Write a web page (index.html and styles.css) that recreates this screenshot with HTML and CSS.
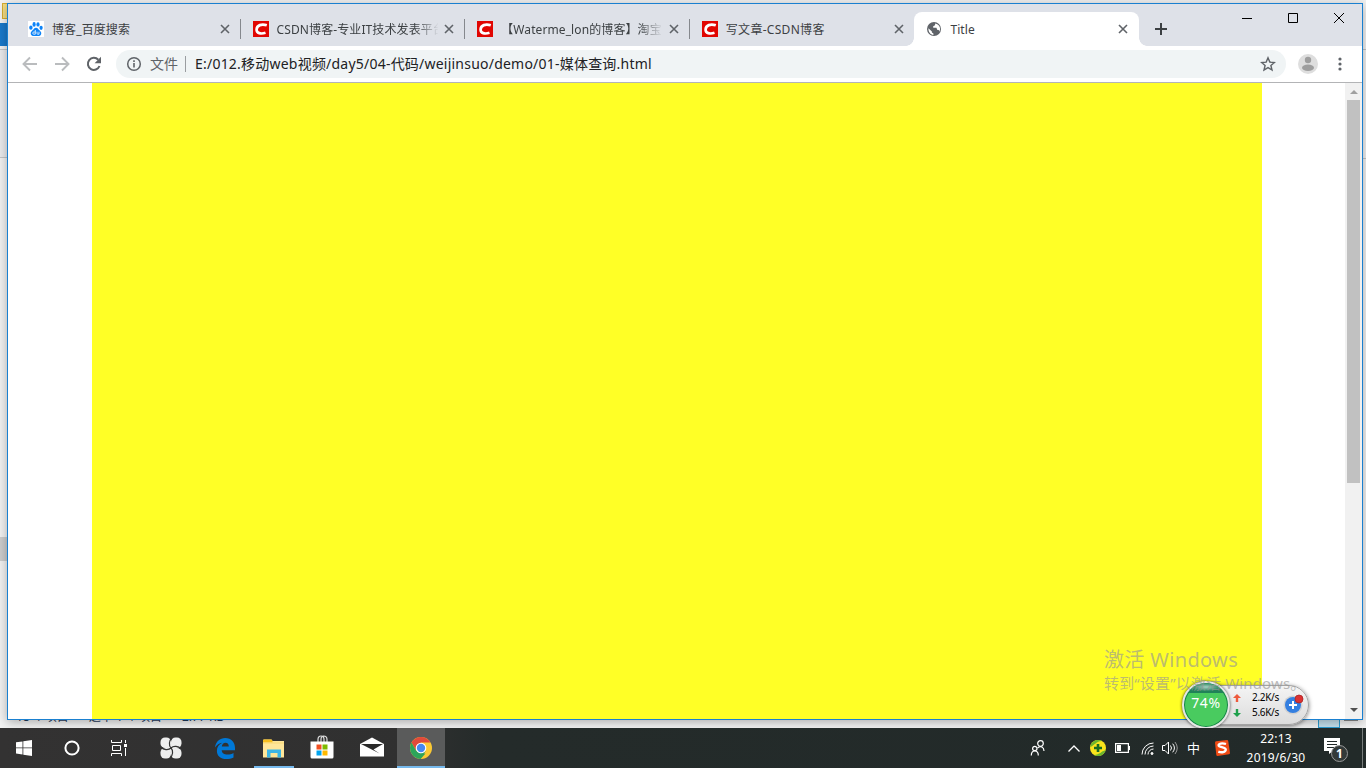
FILE: index.html
```
<!DOCTYPE html>
<html lang="zh-CN">

<head>
    <meta charset="UTF-8">
    <meta name="viewport" content="width=device-width, initial-scale=1.0">
    <title>Title</title>
    <link rel="stylesheet" href="styles.css">
</head>

<body>
    <svg class="defs">
        <symbol id="close" viewBox="0 0 10 10">
            <path d="M1 1l8 8M9 1l-8 8" stroke="#5f6368" stroke-width="1.6" />
        </symbol>
        <symbol id="csdn" viewBox="0 0 16 16">
            <path fill="#e10602" d="M0 0h16v16H0z" />
            <path d="M13.800 4.300C8.500 2.500 3.900 4.300 3.600 8.300C3.300 12.500 8 13.200 12.500 11.800" fill="none" stroke="#fff" stroke-width="2.700" />
        </symbol>
    </svg>

    <div class="desktop">
        <!-- explorer window behind -->
        <div class="back-folder"></div>
        <div class="back-tab"></div>
        <div class="back-panel"></div>
        <div class="back-thumb"></div>
        <div class="back-line"></div>
        <div class="back-status"><span>18 个项目</span><span>选中 1 个项目</span><span>2.77 KB</span></div>
        <div class="back-view"></div>
        <div class="back-view2"></div>

        <div class="window">
            <div class="tabs">
                <div class="tab">
                    <svg class="favicon" viewBox="0 0 16 16">
                        <path fill="#fff" d="M0 0h16v16H0z" />
                        <g fill="#0c83f8">
                            <ellipse cx="6.100" cy="3.400" rx="1.600" ry="2.300" />
                            <ellipse cx="10" cy="3.400" rx="1.600" ry="2.200" />
                            <ellipse cx="2.900" cy="6.700" rx="1.700" ry="2.100" />
                            <ellipse cx="13.100" cy="6.800" rx="1.600" ry="2.100" />
                            <path d="M8 6.700c1.900 0 2.300 1.800 3.700 2.900 1.800 1.500 2 3.200 1 4.500-1.200 1.500-2.800.8-4.700.8s-3.500.7-4.700-.8c-1-1.300-.8-3 1-4.500C5.700 8.500 6.100 6.700 8 6.700z" />
                        </g>
                        <path d="M7.300 9v4.200H5.800c-1.500 0-1.500-2.200 0-2.200h1.500M9 10.700v1.700c0 .8.500.8 2 .8v-2.500" fill="none" stroke="#fff" stroke-width=".8" />
                    </svg>
                    <span class="tab-title">博客_百度搜索</span>
                    <svg class="tab-close"><use href="#close" /></svg>
                </div>
                <div class="tab">
                    <svg class="favicon"><use href="#csdn" /></svg>
                    <span class="tab-title fade">CSDN博客-专业IT技术发表平台</span>
                    <svg class="tab-close"><use href="#close" /></svg>
                </div>
                <div class="tab">
                    <svg class="favicon"><use href="#csdn" /></svg>
                    <span class="tab-title fade">【Waterme_lon的博客】淘宝</span>
                    <svg class="tab-close"><use href="#close" /></svg>
                </div>
                <div class="tab last">
                    <svg class="favicon"><use href="#csdn" /></svg>
                    <span class="tab-title wider">写文章-CSDN博客</span>
                    <svg class="tab-close"><use href="#close" /></svg>
                </div>
                <div class="tab active">
                    <svg class="favicon" viewBox="0 0 16 16">
                        <circle cx="8" cy="8" r="7" fill="#5f6368" />
                        <path d="M2.400 7.200l3.500 3.200v1l1.500 1.200v1.300c-3-.3-5.200-3-5-6.700zM9.200 2.500l-.2 1.700-1.800 1v1.500h3.200l1 2.200h1.200c.7.400.8 1.500.3 2.300 2.600-3.200.8-7.800-3.700-8.700z" fill="#fff" />
                    </svg>
                    <span class="tab-title">Title</span>
                    <svg class="tab-close"><use href="#close" /></svg>
                </div>
                <svg class="new-tab" viewBox="0 0 12 12"><path d="M6 0v12M0 6h12" stroke="#3c4043" stroke-width="2" /></svg>
                <svg class="controls" viewBox="0 0 104 12" fill="none" stroke="#000">
                    <path d="M0 6.500h10M46.500 1.500h9v9h-9zM92 1l10 10M102 1l-10 10" />
                </svg>
            </div>

            <div class="toolbar">
                <svg class="nav" viewBox="0 0 16 16"><path d="M15 8H2M8 1.500L1.500 8 8 14.500" fill="none" stroke="#babcbe" stroke-width="1.900" /></svg>
                <svg class="nav" viewBox="0 0 16 16"><path d="M1 8h13M8 1.500L14.500 8 8 14.500" fill="none" stroke="#babcbe" stroke-width="1.900" /></svg>
                <svg class="nav" viewBox="0 0 16 16">
                    <path d="M13.500 10a6 6 0 1 1-1.200-6.200" fill="none" stroke="#5f6368" stroke-width="2" />
                    <path d="M15 .8v6.400H8.600z" fill="#5f6368" />
                </svg>
                <div class="omnibox">
                    <svg class="info" viewBox="0 0 16 16"><circle cx="8" cy="8" r="6.300" fill="none" stroke="#5f6368" stroke-width="1.500" /><path d="M8 7v4.500M8 4.300v1.600" stroke="#5f6368" stroke-width="1.600" /></svg>
                    <span class="scheme">文件</span>
                    <span class="url">E:/012.移动web视频/day5/04-代码/weijinsuo/demo/01-媒体查询.html</span>
                    <svg class="star" viewBox="0 0 16 16"><path d="M8 1.800l1.800 4.300 4.600.4-3.500 3 1.100 4.500L8 11.600 4 14l1.100-4.500-3.500-3 4.600-.4z" fill="none" stroke="#5f6368" stroke-width="1.400" /></svg>
                </div>
                <svg class="avatar" viewBox="0 0 20 20"><circle cx="10" cy="10" r="10" fill="#dedede" /><circle cx="10" cy="6" r="3.200" fill="#9e9e9e" /><ellipse cx="10" cy="13.800" rx="6" ry="3.200" fill="#9e9e9e" /></svg>
                <svg class="menu" viewBox="0 0 4 14" fill="#5f6368"><circle cx="2" cy="2" r="1.600" /><circle cx="2" cy="7" r="1.600" /><circle cx="2" cy="12" r="1.600" /></svg>
            </div>

            <div class="page">
                <div class="container"></div>
                <div class="scrollbar">
                    <div class="arrow-up"></div>
                    <div class="thumb"></div>
                    <div class="arrow-down"></div>
                </div>
            </div>
        </div>

        <!-- network speed widget -->
        <div class="speed">
            <div class="rates">
                <svg class="rate-arrow" viewBox="0 0 8 8"><path d="M4 0l4 4H5.200v4H2.800V4H0z" fill="#ee5a3c" /></svg><span>2.2K/s</span>
                <svg class="rate-arrow" viewBox="0 0 8 8"><path d="M4 8l4-4H5.200V0H2.800v4H0z" fill="#1ea04c" /></svg><span>5.6K/s</span>
            </div>
            <svg class="boost" viewBox="0 0 22 22">
                <circle cx="10" cy="12" r="9.500" fill="#d2d2d2" /><circle cx="10" cy="12" r="8" fill="#347fe0" />
                <path d="M10 8v8M6 12h8" stroke="#fff" stroke-width="2" />
                <circle cx="16" cy="6" r="4" fill="#dc3232" stroke="#a92424" stroke-width=".8" />
            </svg>
            <div class="ball"><div class="wave"></div><span>74%</span></div>
        </div>

        <div class="watermark">
            <div class="wm-title">激活 Windows</div>
            <div class="wm-text">转到“设置”以激活 Windows。</div>
        </div>

        <div class="taskbar">
            <div class="task">
                <svg width="16" height="16" viewBox="0 0 16 16" fill="#fff"><path d="M0 2.300L6.500 1.400V7.500H0zM7.300 1.300L16 0v7.500H7.300zM0 8.300h6.500v6.200L0 13.600zM7.300 8.300H16V16l-8.700-1.300z" /></svg>
            </div>
            <div class="task">
                <svg width="16" height="16" viewBox="0 0 16 16"><circle cx="8" cy="8" r="6.600" fill="none" stroke="#fff" stroke-width="2" /></svg>
            </div>
            <div class="task view">
                <svg width="17" height="16" viewBox="0 0 17 16" fill="none" stroke="#fff"><path d="M.5 0v2.500h10V0M.5 16v-2.500h10V16M1.500 5.500h8v5h-8zM14.500 0v3M14.500 8v8" /><path d="M13 4h3v3h-3z" fill="#fff" stroke="none" /></svg>
            </div>
            <div class="task wide">
                <svg width="22" height="22" viewBox="0 0 22 22">
                    <g fill="#eee"><rect x=".5" y=".5" width="10.500" height="10.500" rx="4.500" /><rect x="11" y=".5" width="10.500" height="10.500" rx="4.500" /><rect x=".5" y="11" width="10.500" height="10.500" rx="4.500" /><rect x="11" y="11" width="10.500" height="10.500" rx="4.500" /><circle cx="11" cy="11" r="4" /></g>
                    <path d="M11 11C8.500 8.500 9 3.500 12 1M11 11c2.500-2.500 7.500-2 10 1M11 11c2.500 2.500 2 7.500-1 10M11 11C8.500 13.500 3.500 13 1 10" fill="none" stroke="#333" stroke-width="1.200" />
                </svg>
            </div>
            <div class="task edge">
                <svg width="20" height="21" viewBox="0 0 20 21"><path d="M0 9.500C.8 3.500 5 0 10.200 0 16.500 0 20 4.500 20 10v2.300H6.700c.2 3 2.600 4.300 5.600 4.300 2.500 0 4.500-.6 6.200-1.600v4.500c-2 1-4.600 1.500-7.200 1.500C5.500 21 1.900 17.600 1.900 12.900c0-3.700 1.900-6.600 5.400-8.200C4.200 5 1.800 6.700 0 9.500zM6.800 8.500h7c0-2.400-1.100-3.800-3.300-3.800-2 0-3.400 1.500-3.700 3.800z" fill="#0078d7" /></svg>
            </div>
            <div class="task explorer">
                <svg width="22" height="19" viewBox="0 0 22 19"><path d="M0 1.500Q0 .5 1 .5h7.500l1 1.500H21v16.500H0z" fill="#ffe69a" /><path d="M0 1.500Q0 .5 1 .5h7.500l1 1.500v1.500H0z" fill="#f5bd1e" /><path d="M0 3.500h21v1H0z" fill="#f9d875" /><path d="M4 18.500v-8h14v8h-3.500V14h-7v4.500z" fill="#3db5e6" /></svg>
            </div>
            <div class="task store">
                <svg width="24" height="24" viewBox="0 0 24 24"><path d="M8 7V4.500C8 2 9.300 1 11 1s3 1 3 3.500V7M11 7V4.500C11 2 12 1 13.500 1S17 2 17 4.500V7" fill="none" stroke="#ddd" stroke-width="1.200" /><path d="M.5 6.500h23V22q0 1.500-1.500 1.500H2Q.5 23.500.5 22z" fill="#fff" /><path d="M6.500 9.500h5v5h-5z" fill="#f25022" /><path d="M12.500 9.500h5v5h-5z" fill="#7fba00" /><path d="M6.500 15.500h5v5h-5z" fill="#00a4ef" /><path d="M12.500 15.500h5v5h-5z" fill="#ffb900" /></svg>
            </div>
            <div class="task mail">
                <svg width="24" height="20" viewBox="0 0 24 20"><path d="M0 7L12 .5 24 7v12.500H0z" fill="#fff" /><path d="M1 7h22L13.500 12.500 19.500 16.500z" fill="#292929" /></svg>
            </div>
            <div class="task chrome">
                <svg width="22" height="22" viewBox="0 0 22 22"><circle cx="11" cy="11" r="11" fill="#fbc934" /><path d="M1.500 5.500A11 11 0 0 1 20.500 5.500H11L6.200 13.800z" fill="#e04a3b" /><path d="M1.500 5.500l4.700 8.200L11 16.500h4.500L10.500 22A11 11 0 0 1 1.500 5.500z" fill="#2da45a" /><path d="M10.500 22l5.200-8.300-4.700 2.300z" fill="#2da45a" /><circle cx="11" cy="11" r="5.300" fill="#fff" /><circle cx="11" cy="11" r="4.200" fill="#4688f1" /></svg>
            </div>

            <div class="tray">
                <svg class="people" viewBox="0 0 16 16" fill="none" stroke="#fff" stroke-width="1.200"><circle cx="10.500" cy="3.500" r="2.800" /><circle cx="4.800" cy="8.500" r="2.200" /><path d="M1.300 15.500c0-6 7-6 7 0M7.500 8c3-2.500 6.500-1 6.500 3" /></svg>
                <svg class="chevron" viewBox="0 0 12 7"><path d="M.5 6.500L6 1l5.500 5.500" fill="none" stroke="#fff" stroke-width="1.300" /></svg>
                <svg class="guard" viewBox="0 0 16 16"><circle cx="8" cy="8" r="8" fill="#f9e31c" /><path d="M1 4A8 8 0 0 1 12 1C6 1.500 5 5 .3 7zM15.700 10A8 8 0 0 1 4 15c6-.5 7-3.500 11.700-5z" fill="#6cb52d" /><path d="M8 4v8M4 8h8" stroke="#176b21" stroke-width="2.600" /></svg>
                <svg class="battery" viewBox="0 0 16 10"><path d="M.6 .6h12.800v8.800H.6z" fill="none" stroke="#fff" stroke-width="1.200" /><path d="M2 2h4v6H2zM14 3h1v4h-1z" fill="#fff" /></svg>
                <svg class="wifi" viewBox="0 0 13 13" fill="none" stroke="#fff"><path d="M1 12.500A11.500 11.500 0 0 1 12.500 1M4 12.500A8.500 8.500 0 0 1 12.500 4M7 12.500A5.500 5.500 0 0 1 12.500 7" /><circle cx="11" cy="11.500" r="1" fill="#fff" /></svg>
                <svg class="volume" viewBox="0 0 16 14" fill="none" stroke="#fff"><path d="M.5 4.500H3L6.500 1v12L3 9.500H.5zM8.500 4.500q2 2.500 0 5M10.700 2.700q3.500 4.300 0 8.600" /><path d="M13 1q4.500 6 0 12" stroke="#999" /></svg>
                <span class="ime">中</span>
                <svg class="sogou" viewBox="0 0 16 16"><path d="M1 2.500Q1 1.500 2 1.300L13 0q1 0 1.200 1L16 13q0 1-1 1.300L3.500 16q-1 0-1.200-1z" fill="#f04b14" /><path d="M12 4C8 2.700 4.300 3.500 4.600 5.500s7.200 1.300 7.200 4.100S7.500 12.800 4.300 11.600" fill="none" stroke="#fff" stroke-width="2.300" /></svg>
                <div class="clock"><span>22:13</span><span>2019/6/30</span></div>
                <svg class="notice" viewBox="0 0 25 25"><path d="M0 0h16v13H9l-4 3v-3H0z" fill="#fff" /><path d="M3 3.500h10M3 6.500h10M3 9.500h7" stroke="#222a29" /><circle cx="15.500" cy="15.500" r="8" fill="#333a39" stroke="#999" /><text x="15.500" y="20" text-anchor="middle">1</text></svg>
            </div>
        </div>
    </div>
</body>

</html>
```
FILE: styles.css
```
body {
    margin: 0;
    overflow: hidden;
    font-family: "Noto Sans", "Noto Sans CJK SC", sans-serif;
    font-size: 12px;
}

svg {
    display: block;
    flex: none;
}

.defs {
    display: none;
}

.desktop {
    position: relative;
    width: 1366px;
    height: 768px;
    overflow: hidden;
    background: #f2f2f2;
}

/* explorer window behind the browser */
.back-folder {
    position: absolute;
    left: 2px;
    top: 3px;
    width: 10px;
    height: 14px;
    border: 1px solid #d5ad32;
    background: #f4dd83;
}

.back-tab {
    position: absolute;
    left: 0;
    top: 23px;
    width: 10px;
    height: 23px;
    background: #1979ca;
}

.back-panel {
    position: absolute;
    left: 0;
    top: 49px;
    width: 10px;
    height: 107px;
    border-top: 1px solid #c4c5c6;
    border-bottom: 1px solid #c4c5c6;
    background: #eaebed;
}

.back-thumb {
    position: absolute;
    left: 0;
    top: 537px;
    width: 8px;
    height: 24px;
    background: #cdcdcd;
}

.back-line {
    position: absolute;
    right: 0;
    top: 49px;
    width: 4px;
    height: 108px;
    border-top: 1px solid #c4c5c6;
    border-bottom: 1px solid #c4c5c6;
}

.back-status {
    position: absolute;
    left: 16px;
    top: 708px;
    display: flex;
    gap: 20px;
    line-height: 18px;
    color: #1e395b;
}

.back-view {
    position: absolute;
    left: 1318px;
    top: 708px;
    width: 20px;
    height: 18px;
    border: 1px solid #2c9cd0;
    background: #c4e0ed;
}

.back-view2 {
    position: absolute;
    left: 1344px;
    top: 719px;
    width: 14px;
    height: 2px;
    background: #888;
}

/* browser */
.window {
    position: absolute;
    left: 7px;
    top: 3px;
    box-sizing: border-box;
    width: 1356px;
    height: 717px;
    border: 1px solid #1a80d0;
    background: #fff;
    box-shadow: 0 2px 10px rgba(0, 0, 0, 0.3);
    display: flex;
    flex-direction: column;
}

.tabs {
    display: flex;
    align-items: flex-end;
    height: 42px;
    padding-left: 8px;
    background: #dee1e8;
}

.tab {
    box-sizing: border-box;
    position: relative;
    display: flex;
    align-items: center;
    width: 224.6px;
    height: 34px;
    padding-left: 12px;
}

.tab:not(.active):not(.last)::after {
    content: "";
    width: 1px;
    height: 20px;
    margin-left: 10px;
    background: #85888d;
}

.favicon {
    width: 16px;
    height: 16px;
}

.tab-title {
    width: 163px;
    margin: 2px 6px 0 8px;
    line-height: 18px;
    letter-spacing: 0.1px;
    color: #3c4043;
    white-space: nowrap;
    overflow: hidden;
}

.wider {
    letter-spacing: 0.3px;
}

.fade {
    -webkit-mask-image: linear-gradient(to right, #000 138px, transparent 162px);
    mask-image: linear-gradient(to right, #000 138px, transparent 162px);
}

.tab-close {
    width: 10px;
    height: 10px;
}

.last .tab-title,
.active .tab-title {
    width: 162px;
}

.active {
    background: #fff;
    border-radius: 8px 8px 0 0;
}

/* curved feet of the active tab */
.active::before,
.active::after {
    content: "";
    position: absolute;
    bottom: 0;
    width: 8px;
    height: 8px;
}

.active::before {
    left: -8px;
    background: radial-gradient(circle at 0 0, transparent 7.5px, #fff 8px);
}

.active::after {
    right: -8px;
    background: radial-gradient(circle at 100% 0, transparent 7.5px, #fff 8px);
}

.new-tab {
    width: 12px;
    height: 12px;
    margin: 0 0 11px 16px;
}

.controls {
    width: 104px;
    height: 12px;
    margin: 0 0 22px 75px;
}

.toolbar {
    display: flex;
    align-items: center;
    height: 36px;
    padding-left: 14px;
    border-bottom: 1px solid #b3b4b6;
}

.nav {
    width: 16px;
    height: 16px;
    margin-right: 16px;
}

.omnibox {
    box-sizing: border-box;
    display: flex;
    align-items: center;
    width: 1170px;
    height: 28px;
    margin-left: -2px;
    padding: 0 10px;
    border-radius: 14px;
    background: #f0f4f5;
    font-size: 14px;
}

.info,
.star {
    width: 16px;
    height: 16px;
}

.scheme {
    margin-left: 8px;
    padding-right: 7px;
    border-right: 1px solid #9a9da0;
    line-height: 16px;
    color: #5f6368;
}

.url {
    margin: 0 0 2px 9px;
    letter-spacing: 0.22px;
    color: #202124;
    white-space: nowrap;
}

.star {
    margin-left: auto;
}

.avatar {
    width: 20px;
    height: 20px;
    margin-left: 12px;
}

.menu {
    width: 4px;
    height: 14px;
    margin-left: 20px;
}

.page {
    display: flex;
    flex: 1;
}

.container {
    width: 1170px;
    margin: 0 auto;
    background: #ffff26;
}

.scrollbar {
    display: flex;
    flex-direction: column;
    align-items: center;
    width: 17px;
    background: #f1f1f1;
}

.arrow-up {
    margin-top: 7px;
    border: 4px solid transparent;
    border-top: 0;
    border-bottom-color: #a0a0a0;
}

.arrow-down {
    margin: auto 0 7px;
    border: 4px solid transparent;
    border-bottom: 0;
    border-top-color: #505050;
}

.thumb {
    width: 13px;
    height: 383px;
    margin-top: 6px;
    background: #c1c1c1;
}

/* speed widget */
.speed {
    position: absolute;
    left: 1184px;
    top: 685px;
    box-sizing: border-box;
    display: flex;
    align-items: center;
    width: 125px;
    height: 40px;
    padding-left: 48px;
    border: 1px solid #a3a3a3;
    border-radius: 20px;
    background: linear-gradient(#f4f4f4, #dcdcdc);
    box-shadow: 0 1px 4px rgba(0, 0, 0, 0.5);
}

.rates {
    display: grid;
    grid-template-columns: 8px 38px;
    align-items: center;
    line-height: 15px;
    font-size: 10px;
    letter-spacing: -0.3px;
    text-align: right;
    color: #000;
}

.rate-arrow {
    width: 8px;
    height: 8px;
}

.boost {
    width: 22px;
    height: 22px;
    margin: -2px 0 0 4px;
}

.ball {
    position: absolute;
    left: -3px;
    top: -5px;
    box-sizing: border-box;
    width: 48px;
    height: 48px;
    border: 2px solid #e6e6e6;
    border-radius: 50%;
    background: #49cb5f;
    box-shadow: inset 0 0 0 1px #168249, 0 0 3px rgba(0, 0, 0, 0.7);
    overflow: hidden;
    color: #fff;
    font-size: 14px;
    line-height: 39px;
    letter-spacing: 0.6px;
    text-align: center;
}

.ball span {
    position: relative;
}

.wave {
    position: absolute;
    left: 0;
    top: 0;
    width: 100%;
    height: 10px;
    background: radial-gradient(ellipse at 50% 40%, #a4cfbf 0, #218259 50%);
}

.watermark {
    position: absolute;
    left: 1104px;
    top: 646px;
    color: rgba(150, 150, 150, 0.65);
    white-space: nowrap;
}

.wm-title {
    font-size: 20px;
    line-height: 27px;
    letter-spacing: 0.35px;
}

.wm-text {
    font-size: 15px;
    line-height: 20px;
    letter-spacing: 0.15px;
}

/* taskbar */
.taskbar {
    position: absolute;
    left: 0;
    bottom: 0;
    display: flex;
    width: 1366px;
    height: 40px;
    background: linear-gradient(to right, #333232, #303030 30%, #242b2a 36%, #222a29);
}

.task {
    box-sizing: border-box;
    display: flex;
    align-items: center;
    justify-content: center;
    width: 48px;
}

.view {
    padding-right: 1px;
}

.wide {
    width: 53px;
}

.edge {
    width: 57px;
    padding-right: 2px;
}

.explorer {
    width: 40px;
    border-bottom: 2px solid #76b9ed;
    padding-top: 2px;
}

.store {
    width: 57px;
    padding-right: 1px;
    padding-bottom: 3px;
}

.mail {
    width: 46px;
    padding-right: 4px;
    padding-bottom: 2px;
}

.chrome {
    border-bottom: 2px solid #76b9ed;
    padding-top: 2px;
    background: #5a5b5b;
}

.tray {
    display: flex;
    align-items: center;
    margin-left: auto;
    padding-right: 13px;
    border-right: 1px solid #777c7b;
    margin-right: 3px;
    color: #fff;
}

.people {
    width: 16px;
    height: 16px;
    margin-right: 22px;
}

.chevron {
    width: 12px;
    height: 7px;
    margin-right: 10px;
}

.guard {
    width: 16px;
    height: 16px;
    margin-right: 9px;
}

.battery {
    width: 16px;
    height: 10px;
    margin-right: 10px;
}

.wifi {
    width: 13px;
    height: 13px;
    margin-right: 8px;
}

.volume {
    width: 16px;
    height: 14px;
    margin-right: 9px;
}

.ime {
    width: 14px;
    margin: -2px 13px 0 0;
    font-size: 13px;
}

.sogou {
    width: 16px;
    height: 16px;
}

.clock {
    display: flex;
    flex-direction: column;
    align-items: center;
    width: 60px;
    margin: -1px 18px 0 16px;
    line-height: 19px;
    letter-spacing: 0.2px;
}

.notice {
    width: 25px;
    height: 25px;
    margin-top: 4px;
}

.notice text {
    font-size: 12px;
    font-weight: bold;
    fill: #fff;
}
```
